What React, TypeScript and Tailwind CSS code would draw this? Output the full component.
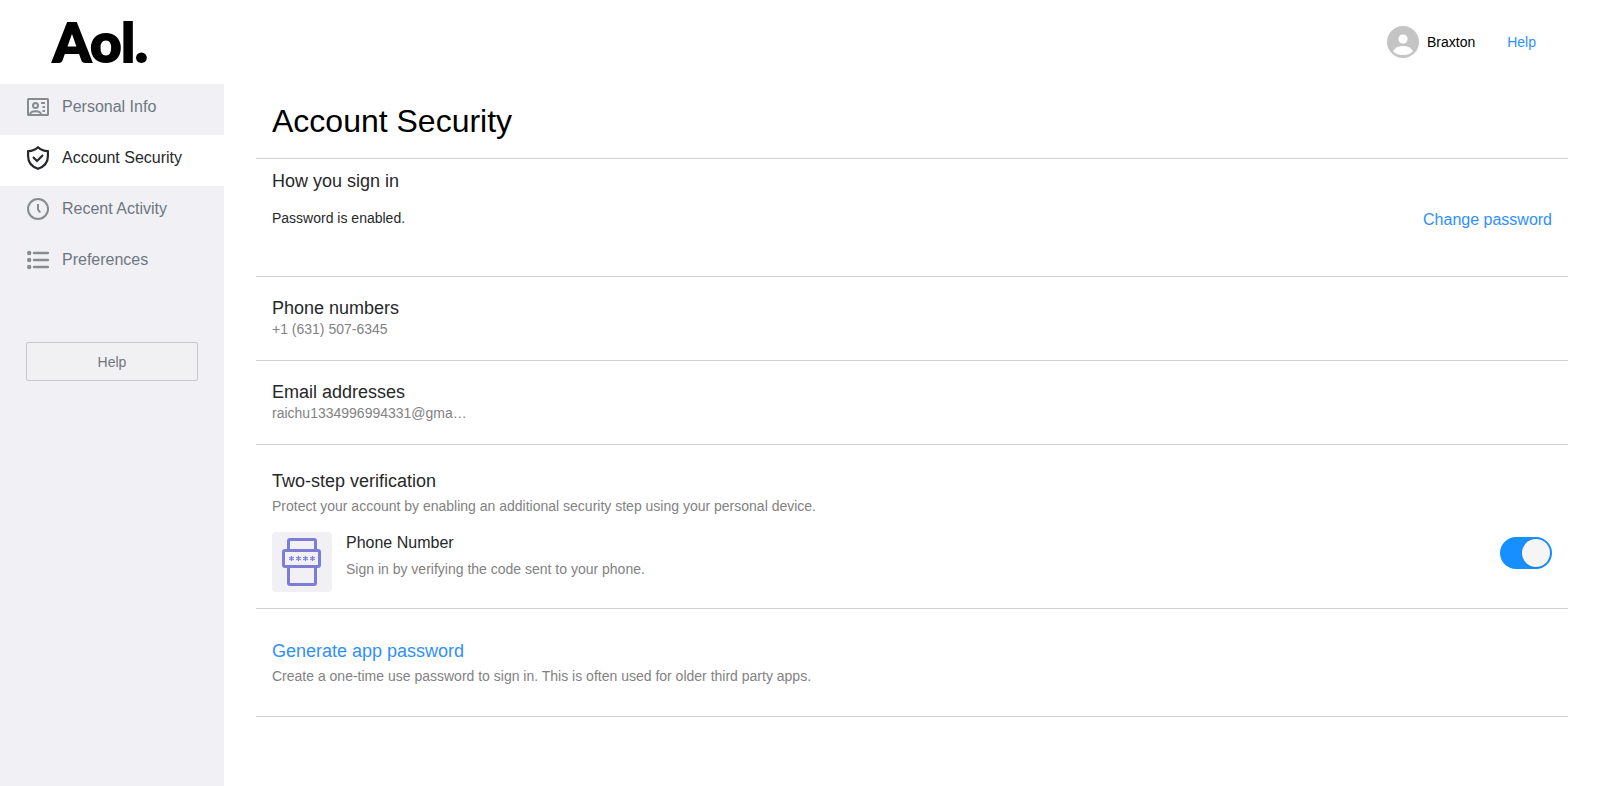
import { useState, type ReactNode } from "react";

function IdCardIcon() {
  return (
    <svg width="22" height="18" viewBox="0 0 22 18" fill="none" stroke="#878c91" strokeWidth="2" aria-hidden="true">
      <rect x="1" y="1" width="20" height="16" rx="0.5" />
      <circle cx="8.5" cy="7.5" r="2.5" />
      <path d="M3 16.5c.4-2.2 2.6-3.2 5.5-3.2s5.1 1 5.5 3.2" />
      <path d="M14 5h4M15.5 9h2.5M15.5 13h2.5" />
    </svg>
  );
}

function ShieldIcon() {
  return (
    <svg width="22" height="24" viewBox="0 0 22 24" fill="none" stroke="#26282a" strokeWidth="2.2" aria-hidden="true">
      <path d="M11 1.2C8.5 3.7 5.2 5 1.1 5.1v5.1C1.1 16 4.5 20.5 11 22.8 17.5 20.5 20.9 16 20.9 10.2V5.1C16.8 5 13.5 3.7 11 1.2z" strokeLinejoin="round" />
      <path d="M6 11l4 4 6-6" />
    </svg>
  );
}

function ClockIcon() {
  return (
    <svg width="22" height="22" viewBox="0 0 22 22" fill="none" stroke="#878c91" strokeWidth="2" aria-hidden="true">
      <circle cx="11" cy="11" r="10" />
      <path d="M11 6v5.5l2.2 3" strokeLinejoin="round" />
    </svg>
  );
}

function ListIcon() {
  return (
    <svg width="22" height="20" viewBox="0 0 22 20" fill="#878c91" aria-hidden="true">
      <circle cx="2.2" cy="3" r="2.2" />
      <circle cx="2.2" cy="10" r="2.2" />
      <circle cx="2.2" cy="17" r="2.2" />
      <path d="M7 3h14M7 10h14M7 17h14" stroke="#878c91" strokeWidth="2.4" strokeLinecap="round" />
    </svg>
  );
}

function AvatarIcon() {
  return (
    <svg width="32" height="32" viewBox="0 0 32 32" aria-hidden="true">
      <circle cx="16" cy="16" r="16" fill="#c4c4c4" />
      <circle cx="16" cy="13" r="4.6" fill="#fff" />
      <path d="M6 25.2c2-3.3 5.7-5.2 10-5.2s8 1.9 10 5.2c-2.6 2.5-6 3.9-10 3.9s-7.4-1.4-10-3.9z" fill="#fff" />
    </svg>
  );
}

function PhoneCodeIcon() {
  return (
    <svg className="shrink-0" width="60" height="60" viewBox="0 0 60 60" fill="none" stroke="#7d7dd6" aria-hidden="true">
      <rect width="60" height="60" rx="4" fill="#f0f0f5" stroke="none" />
      <rect x="16.5" y="7.5" width="27" height="45" rx="1.5" strokeWidth="3" />
      <rect x="11.5" y="18.5" width="36" height="16" rx="1.5" fill="#f0f0f5" strokeWidth="3" />
      {[19.5, 26.5, 33.5, 40.5].map((x) => (
        <path key={x} d={`M${x} 24v5M${x - 2.3} 25.2l4.6 2.6M${x - 2.3} 27.8l4.6-2.6`} strokeWidth="1.2" />
      ))}
    </svg>
  );
}

const navItems = [
  { label: "Personal Info", icon: <IdCardIcon /> },
  { label: "Account Security", icon: <ShieldIcon />, active: true },
  { label: "Recent Activity", icon: <ClockIcon /> },
  { label: "Preferences", icon: <ListIcon /> },
];

function Sidebar() {
  return (
    <aside className="w-56 shrink-0 bg-[#f0f0f5]">
      <nav>
        <ul>
          {navItems.map((item) => (
            <li key={item.label}>
              <a
                href="#"
                aria-current={item.active ? "page" : undefined}
                className={
                  item.active
                    ? "flex h-[51px] items-center gap-[13px] bg-white pb-1.5 pl-[27px] text-base text-[#26282a]"
                    : "flex h-[51px] items-center gap-[13px] pb-1.5 pl-[27px] text-base text-[#6e7780]"
                }
              >
                {item.icon}
                {item.label}
              </a>
            </li>
          ))}
        </ul>
      </nav>
      <div className="px-[26px] pt-[54px]">
        <button className="h-[39px] w-full rounded-xs border border-[#c7c7d1] bg-[#f1f1f3] text-sm text-[#6e7780]">
          Help
        </button>
      </div>
    </aside>
  );
}

function Section({ className, children }: { className: string; children: ReactNode }) {
  return <section className={`border-b border-[#d0d0d0] px-4 ${className}`}>{children}</section>;
}

export default function App() {
  const [twoStep, setTwoStep] = useState(true);

  return (
    <div className="flex min-h-screen flex-col bg-white font-['Liberation_Sans',Arial,sans-serif] text-[#26282a]">
      <header className="flex h-[84px] items-center justify-between pr-16 pl-[53px]">
        <a
          href="#"
          className="font-[Lato,sans-serif] text-[54px] leading-[84px] font-black text-black [-webkit-text-stroke:2px_#000]"
        >
          Aol.
        </a>
        <div className="flex items-center gap-8 text-sm">
          <button className="flex items-center gap-2 text-black">
            <AvatarIcon />
            Braxton
          </button>
          <a href="#" className="text-[#2f8fff]">Help</a>
        </div>
      </header>

      <div className="flex flex-1">
        <Sidebar />

        <main className="min-w-0 flex-1 px-8">
          <h1 className="border-b border-[#d0d0d0] px-4 text-[32px] leading-[74px] text-black">Account Security</h1>

          <Section className="pt-[11px] pb-11">
            <h2 className="text-lg leading-[22px]">How you sign in</h2>
            <div className="mt-4 flex items-start justify-between">
              <p className="text-sm">Password is enabled.</p>
              <a href="#" className="text-base text-[#2f8fff]">Change password</a>
            </div>
          </Section>

          <Section className="pt-5 pb-[21px]">
            <h2 className="text-lg leading-[22px]">Phone numbers</h2>
            <p className="text-sm text-[#828282]">+1 (631) 507-6345</p>
          </Section>

          <Section className="pt-5 pb-[21px]">
            <h2 className="text-lg leading-[22px]">Email addresses</h2>
            <p className="text-sm text-[#828282]">raichu1334996994331@gma…</p>
          </Section>

          <Section className="pt-[25px] pb-4">
            <h2 className="text-lg leading-[22px]">Two-step verification</h2>
            <p className="mt-1 text-sm text-[#828282]">
              Protect your account by enabling an additional security step using your personal device.
            </p>
            <div className="mt-4 flex items-start gap-3.5">
              <PhoneCodeIcon />
              <div className="flex-1">
                <h3 id="phone-number" className="text-base leading-[22px]">Phone Number</h3>
                <p className="mt-[5px] text-sm text-[#828282]">Sign in by verifying the code sent to your phone.</p>
              </div>
              <label className="mt-[5px] flex h-8 w-[52px] cursor-pointer items-center rounded-full bg-[#c7c7d1] p-0.5 has-checked:justify-end has-checked:bg-[#188fff]">
                <input
                  type="checkbox"
                  role="switch"
                  aria-labelledby="phone-number"
                  className="sr-only"
                  checked={twoStep}
                  onChange={(e) => setTwoStep(e.target.checked)}
                />
                <span className="size-7 rounded-full bg-[#f5f5f5] shadow-sm" />
              </label>
            </div>
          </Section>

          <Section className="pt-[31px] pb-[30px]">
            <h2 className="text-lg leading-[22px]">
              <a href="#" className="text-[#2f8fff]">Generate app password</a>
            </h2>
            <p className="mt-1 text-sm text-[#828282]">
              Create a one-time use password to sign in. This is often used for older third party apps.
            </p>
          </Section>
        </main>
      </div>
    </div>
  );
}
